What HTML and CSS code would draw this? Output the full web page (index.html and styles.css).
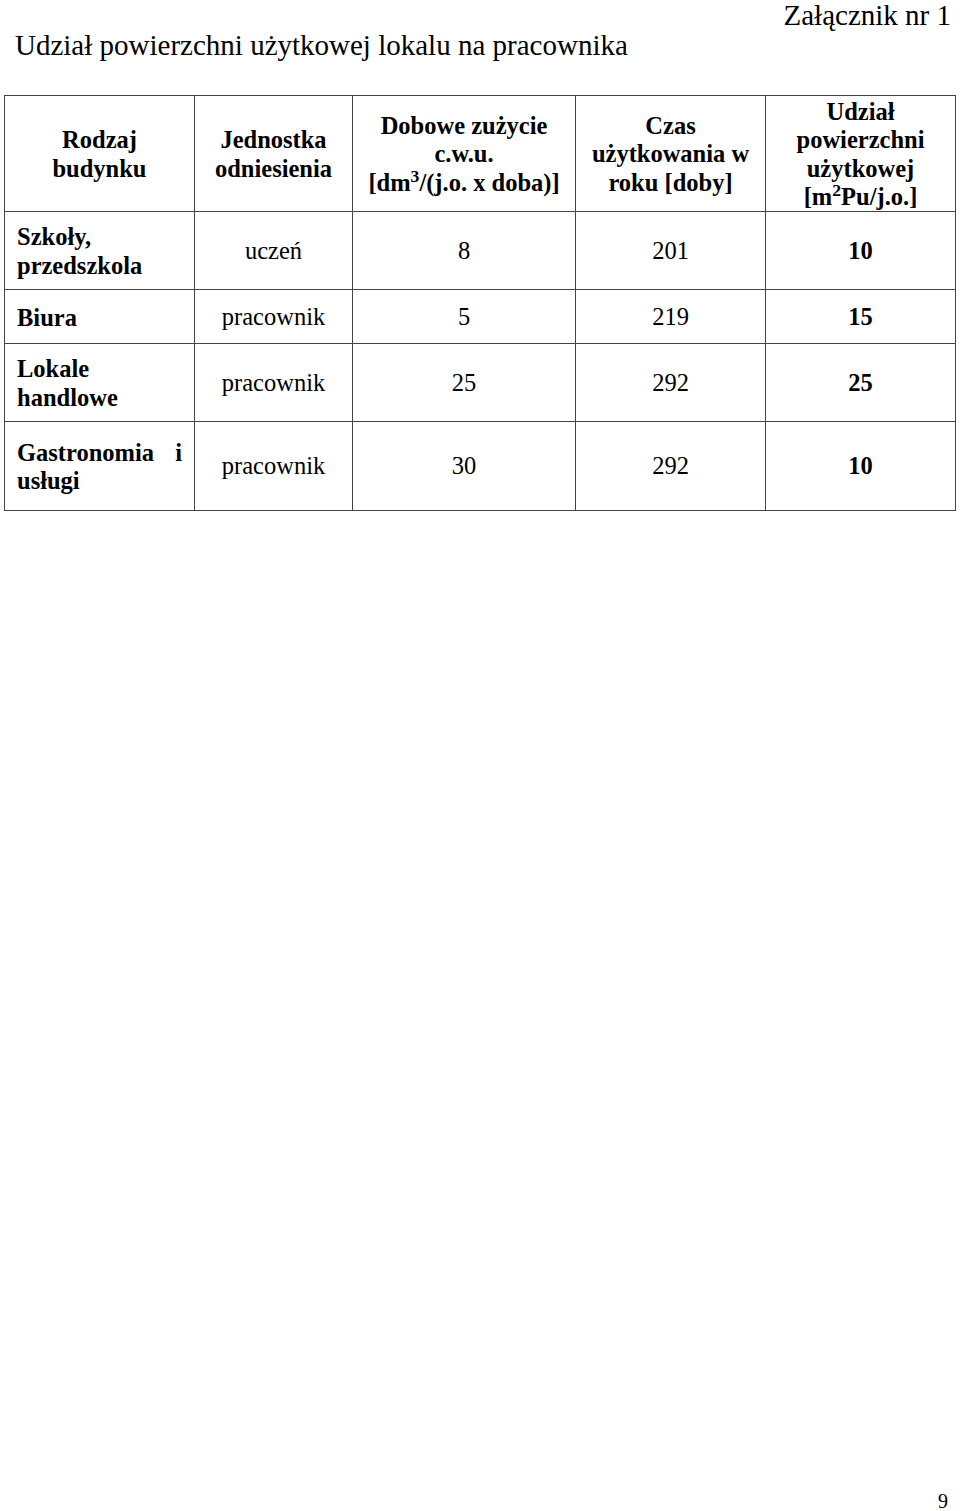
FILE: index.html
```html
<!DOCTYPE html>
<html lang="pl">
<head>
<meta charset="utf-8">
<title>Udział powierzchni użytkowej lokalu na pracownika</title>
<link rel="stylesheet" href="styles.css">
</head>
<body>
<div class="page">
  <div class="annex">Załącznik nr 1</div>
  <h1 class="title">Udział powierzchni użytkowej lokalu na pracownika</h1>
  <table class="grid">
    <colgroup>
      <col class="c1"><col class="c2"><col class="c3"><col class="c4"><col class="c5">
    </colgroup>
    <thead>
      <tr class="r-head">
        <th>Rodzaj<br>budynku</th>
        <th>Jednostka<br>odniesienia</th>
        <th>Dobowe zużycie<br>c.w.u.<br>[dm<sup class="sup">3</sup>/(j.o. x doba)]</th>
        <th>Czas<br>użytkowania w<br>roku [doby]</th>
        <th>Udział<br>powierzchni<br>użytkowej<br>[m<sup class="sup">2</sup>Pu/j.o.]</th>
      </tr>
    </thead>
    <tbody>
      <tr class="r-two">
        <td class="name">Szkoły,<br>przedszkola</td>
        <td>uczeń</td><td>8</td><td>201</td><td class="share">10</td>
      </tr>
      <tr class="r-one">
        <td class="name">Biura</td>
        <td>pracownik</td><td>5</td><td>219</td><td class="share">15</td>
      </tr>
      <tr class="r-two">
        <td class="name">Lokale<br>handlowe</td>
        <td>pracownik</td><td>25</td><td>292</td><td class="share">25</td>
      </tr>
      <tr class="r-tall">
        <td class="name just">Gastronomia i usługi</td>
        <td>pracownik</td><td>30</td><td>292</td><td class="share">10</td>
      </tr>
    </tbody>
  </table>
  <div class="pagenum">9</div>
</div>
</body>
</html>
```

FILE: styles.css
```css
html, body {
  margin: 0;
  padding: 0;
  background: #fff;
}
body {
  font-family: "Liberation Serif", "Times New Roman", serif;
  color: #000;
}
.page {
  min-height: 1511px;
  display: flex;
  flex-direction: column;
  box-sizing: border-box;
}
.annex {
  font-size: 29px;
  line-height: 20px;
  text-align: right;
  padding: 5px 9px 0 0;
}
.title {
  font-size: 29px;
  font-weight: normal;
  line-height: 20px;
  margin: 10px 0 0 0;
  padding-left: 15px;
}
.grid {
  margin: 40px 0 0 4px;
  border-collapse: collapse;
  table-layout: fixed;
  width: 952px;
  font-size: 24.5px;
}
.c1 { width: 190px; }
.c2 { width: 158px; }
.c3 { width: 223px; }
.c4 { width: 190px; }
.c5 { width: 190px; }
.grid th, .grid td {
  border: 1px solid #444;
  text-align: center;
  vertical-align: middle;
  padding: 0 4px;
  line-height: 28.3px;
}
.grid th {
  font-weight: bold;
  padding-top: 2px;
}
.grid td.name {
  text-align: left;
  font-weight: bold;
  padding: 2px 12px 0 12px;
}
.grid td.just {
  text-align: justify;
}
.grid td.share {
  font-weight: bold;
}
.sup {
  font-size: 72%;
  vertical-align: 9px;
  line-height: 0;
}
.r-head { height: 115px; }
.r-two { height: 78px; }
.r-one { height: 54px; }
.r-tall { height: 89px; }
.pagenum {
  margin-top: auto;
  font-size: 20px;
  line-height: 20px;
  text-align: right;
  padding: 0 12px 0 0;
}
```
